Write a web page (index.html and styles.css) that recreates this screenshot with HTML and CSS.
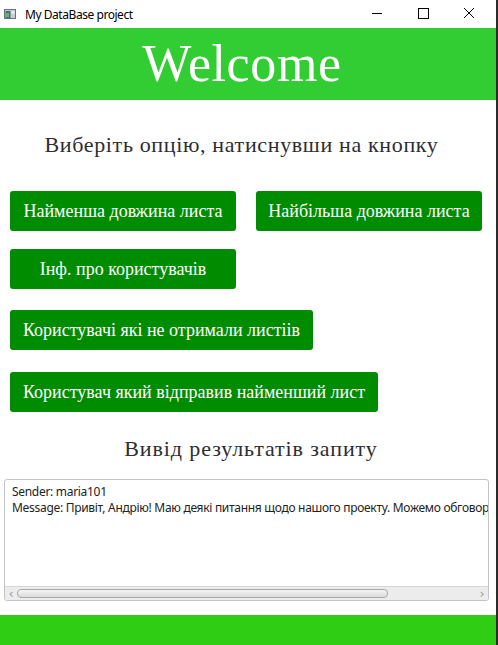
FILE: index.html
```html
<!DOCTYPE html>
<html lang="uk">
<head>
<meta charset="utf-8">
<title>My DataBase project</title>
<link rel="stylesheet" href="styles.css">
</head>
<body>
<div class="window">
  <div class="titlebar">
    <svg class="app-icon" width="12" height="10" viewBox="0 0 12 10">
      <rect x="0.5" y="0.5" width="11" height="9" fill="#c8ccd0" stroke="#6b7178"/>
      <rect x="1.5" y="2" width="5" height="7" fill="#3f6f8f"/>
      <rect x="2" y="4" width="3" height="4" fill="#6fae6f"/>
      <rect x="7.5" y="2" width="3" height="3" fill="#e8eaec"/>
    </svg>
    <span class="title-text">My DataBase project</span>
    <div class="controls">
      <svg class="ctl" width="46" height="28" viewBox="0 0 46 28"><line x1="18" y1="13.5" x2="28" y2="13.5" stroke="#000" stroke-width="1"/></svg>
      <svg class="ctl" width="46" height="28" viewBox="0 0 46 28"><rect x="18.5" y="8.5" width="10" height="10" fill="none" stroke="#000" stroke-width="1"/></svg>
      <svg class="ctl" width="46" height="28" viewBox="0 0 46 28"><path d="M18 8 L28 18 M28 8 L18 18" stroke="#000" stroke-width="1"/></svg>
    </div>
  </div>
  <div class="header">Welcome</div>
  <div class="content">
    <h2 class="subtitle choose-title">Виберіть опцію, натиснувши на кнопку</h2>
    <div class="buttons">
      <div class="row">
        <button class="btn fixed">Найменша довжина листа</button>
        <button class="btn fixed">Найбільша довжина листа</button>
      </div>
      <div class="row row-2">
        <button class="btn fixed">Інф. про користувачів</button>
      </div>
      <div class="row row-3">
        <button class="btn">Користувачі які не отримали листіів</button>
      </div>
      <div class="row row-4">
        <button class="btn">Користувач який відправив найменший лист</button>
      </div>
    </div>
    <h2 class="subtitle result-title">Вивід результатів запиту</h2>
    <div class="output">
      <div class="output-text">
        <div class="line">Sender: maria101</div>
        <div class="line">Message: Привіт, Андрію! Маю деякі питання щодо нашого проекту. Можемо обговорити їх сьогодні?</div>
      </div>
      <div class="hscroll">
        <span class="arrow">&lsaquo;</span>
        <div class="track"><div class="thumb"></div></div>
        <span class="arrow">&rsaquo;</span>
      </div>
    </div>
  </div>
  <div class="footer"></div>
</div>
</body>
</html>
```

FILE: styles.css
```css
html, body {
  margin: 0;
  padding: 0;
  background: #fff;
  overflow: hidden;
}

.window {
  width: 498px;
  height: 645px;
  box-sizing: border-box;
  border-right: 2px solid #2b2b2b;
  display: flex;
  flex-direction: column;
  background: #fff;
}

.titlebar {
  height: 28px;
  display: flex;
  align-items: center;
  font-family: "Noto Sans", "Open Sans", sans-serif;
  font-size: 12px;
  color: #000;
}

.app-icon {
  margin-left: 4px;
  margin-right: 9px;
}

.title-text {
  flex: 1;
  letter-spacing: -0.45px;
}

.controls {
  display: flex;
  margin-right: 4px;
}

.ctl {
  display: block;
}

.header {
  height: 72px;
  background: #32cd32;
  color: #fff;
  font-family: "Liberation Serif", serif;
  font-size: 52px;
  line-height: 72px;
  text-align: center;
  letter-spacing: 0.6px;
  padding-right: 12px;
}

.content {
  display: flex;
  flex-direction: column;
  flex: 1;
}

.subtitle {
  margin: 33px 0 0;
  font-family: "Liberation Serif", serif;
  font-weight: normal;
  font-size: 22px;
  line-height: 24px;
  color: #2d2d33;
  text-align: center;
}

.choose-title {
  letter-spacing: 0.65px;
  padding-right: 13px;
}

.buttons {
  display: flex;
  flex-direction: column;
  margin-top: 34px;
  padding-left: 10px;
}

.row {
  display: flex;
  gap: 20px;
}

.row-2 {
  margin-top: 18px;
}

.row-3 {
  margin-top: 21px;
}

.row-4 {
  margin-top: 22px;
}

.btn {
  height: 40px;
  background: #008c00;
  color: #fff;
  border: none;
  border-radius: 3px;
  font-family: "Liberation Serif", serif;
  font-size: 18px;
  padding: 0 13px;
  white-space: nowrap;
}

.btn.fixed {
  width: 226px;
  padding: 0;
}

.result-title {
  margin-top: 25px;
  letter-spacing: 0.9px;
  padding-left: 6px;
}

.output {
  margin: 18px 7px 0 4px;
  height: 122px;
  box-sizing: border-box;
  border: 1px solid #c4c4c4;
  border-radius: 3px;
  display: flex;
  flex-direction: column;
  overflow: hidden;
}

.output-text {
  flex: 1;
  padding: 4px 0 0 7px;
  font-family: "Noto Sans", "Open Sans", sans-serif;
  font-size: 12px;
  line-height: 16px;
  color: #222;
  overflow: hidden;
  white-space: nowrap;
  letter-spacing: -0.3px;
}

.hscroll {
  height: 13px;
  background: #ececec;
  border-top: 1px solid #d6d6d6;
  display: flex;
  align-items: center;
}

.arrow {
  width: 12px;
  text-align: center;
  font-family: "DejaVu Sans", sans-serif;
  font-size: 13px;
  line-height: 12px;
  color: #9a9a9a;
}

.track {
  flex: 1;
  padding-right: 88px;
}

.thumb {
  height: 7px;
  border: 1px solid #a9a9a9;
  border-radius: 4px;
  background: linear-gradient(#f4f4f4, #dcdcdc);
}

.footer {
  height: 30px;
  background: #2fce14;
}
```
